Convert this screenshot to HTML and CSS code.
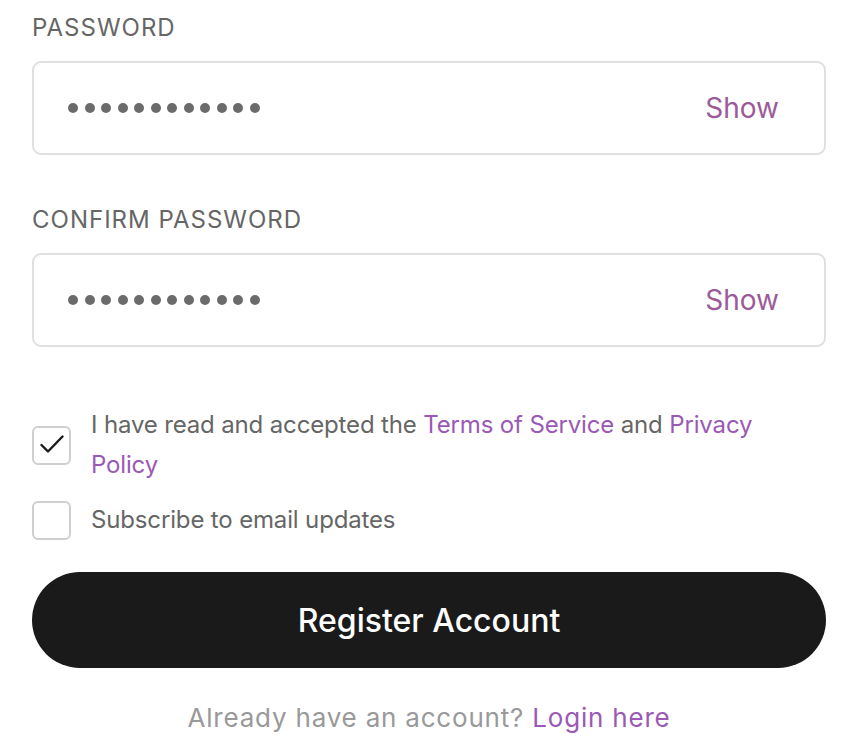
FILE: index.html
```html
<!DOCTYPE html>
<html lang="en">
<head>
<meta charset="utf-8">
<title>Register</title>
<link rel="stylesheet" href="styles.css">
</head>
<body>
<form class="form">
  <div class="field">
    <label class="label">Password</label>
    <div class="input">
      <div class="dots"><span></span><span></span><span></span><span></span><span></span><span></span><span></span><span></span><span></span><span></span><span></span><span></span></div>
      <span class="show">Show</span>
    </div>
  </div>
  <div class="field field-second">
    <label class="label">Confirm Password</label>
    <div class="input">
      <div class="dots"><span></span><span></span><span></span><span></span><span></span><span></span><span></span><span></span><span></span><span></span><span></span><span></span></div>
      <span class="show">Show</span>
    </div>
  </div>
  <div class="checks">
    <div class="check-row">
      <span class="box">
        <svg class="tick" viewBox="0 0 24 24" width="24" height="24"><path d="M1.5 12l6.5 6.5L22.5 3.5" fill="none" stroke="#1a1a1a" stroke-width="2.4" stroke-linecap="round" stroke-linejoin="round"/></svg>
      </span>
      <span class="check-text">I have read and accepted the <a class="link">Terms of Service</a> and <a class="link">Privacy Policy</a></span>
    </div>
    <div class="check-row">
      <span class="box"></span>
      <span class="check-text">Subscribe to email updates</span>
    </div>
  </div>
  <button type="button" class="submit">Register Account</button>
  <p class="footer">Already have an account? <a class="link">Login here</a></p>
</form>
</body>
</html>
```

FILE: styles.css
```css
* { box-sizing: border-box; }
html, body { margin: 0; padding: 0; background: #fff; }
body {
  font-family: Inter, "Noto Sans", sans-serif;
  color: #666;
}
.form {
  padding: 13px 18px 0 32px;
  display: flex;
  flex-direction: column;
}
.field { display: flex; flex-direction: column; gap: 19px; }
.field-second { margin-top: 50px; }
.label {
  font-size: 24px;
  line-height: 29px;
  letter-spacing: 1px;
  text-transform: uppercase;
  color: #666;
}
.input {
  height: 94px;
  border: 2px solid #e0e0e0;
  border-radius: 9px;
  display: flex;
  align-items: center;
  justify-content: space-between;
  padding: 0 45px 0 34px;
}
.dots { display: flex; gap: 6.5px; }
.dots span {
  width: 10px; height: 10px; border-radius: 50%;
  background: #6b6b6b;
}
.show { font-size: 28px; color: #9c5a98; }
.checks {
  margin-top: 58px;
  display: flex;
  flex-direction: column;
  gap: 15px;
}
.check-row { display: flex; align-items: center; gap: 20px; }
.box {
  flex: none;
  width: 39px; height: 39px;
  border: 2px solid #cfcfcf;
  border-radius: 6px;
  display: flex; align-items: center; justify-content: center;
}
.tick { width: 24px; height: 24px; }
.check-text {
  font-size: 24px;
  letter-spacing: -0.15px;
  line-height: 40px;
  color: #666;
  padding-right: 8px;
}
.link { color: #9b59b6; text-decoration: none; }
.submit {
  margin-top: 32px;
  height: 96px;
  border: none;
  border-radius: 48px;
  background: #1a1a1a;
  color: #fff;
  font-family: Inter, sans-serif;
  font-size: 32px;
  font-weight: 500;
}
.footer {
  margin: 34px 0 0;
  text-align: center;
  font-size: 26px;
  letter-spacing: 0.8px;
  color: #999;
}
```
